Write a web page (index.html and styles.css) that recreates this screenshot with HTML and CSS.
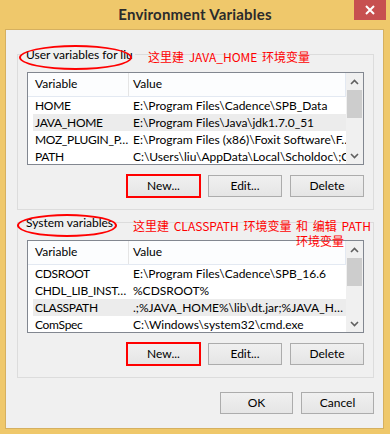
FILE: index.html
```html
<!DOCTYPE html>
<html lang="en">
<head>
    <meta charset="UTF-8">
    <meta name="viewport" content="width=device-width, initial-scale=1.0">
    <title>Environment Variables</title>
    <link rel="stylesheet" href="styles.css">
</head>
<body>
    <div class="window">
        <div class="titlebar">
            <span></span>
            <div class="title">Environment Variables</div>
            <div class="close-cell">
                <div class="close-btn">
                    <svg width="10" height="10" viewBox="0 0 10 10">
                        <path d="M1 1 L9 9 M9 1 L1 9" stroke="#fff" stroke-width="2"/>
                    </svg>
                </div>
            </div>
        </div>

        <div class="client">
            <!-- user variables -->
            <div class="group group-user">
                <span class="group-label">User variables for liu</span>
                <span class="ring ring-user"></span>
                <span class="note note-user">这里建 JAVA_HOME 环境变量</span>
                <div class="list">
                    <div class="table">
                        <div class="row head"><span class="c1">Variable</span><span class="c2">Value</span></div>
                        <div class="row"><span class="c1">HOME</span><span class="c2">E:\Program Files\Cadence\SPB_Data</span></div>
                        <div class="row selected"><span class="c1">JAVA_HOME</span><span class="c2">E:\Program Files\Java\jdk1.7.0_51</span></div>
                        <div class="row"><span class="c1">MOZ_PLUGIN_P…</span><span class="c2">E:\Program Files (x86)\Foxit Software\F…</span></div>
                        <div class="row"><span class="c1">PATH</span><span class="c2">C:\Users\liu\AppData\Local\Scholdoc\;C…</span></div>
                    </div>
                    <div class="scrollbar">
                        <div class="arrow">
                            <svg width="9" height="6" viewBox="0 0 9 6"><path d="M1 5 L4.5 1.5 L8 5" fill="none" stroke="#606060" stroke-width="1.6"/></svg>
                        </div>
                        <div class="track"><div class="thumb"></div></div>
                        <div class="arrow">
                            <svg width="9" height="6" viewBox="0 0 9 6"><path d="M1 1 L4.5 4.5 L8 1" fill="none" stroke="#606060" stroke-width="1.6"/></svg>
                        </div>
                    </div>
                </div>
                <div class="buttons">
                    <div class="btn marked">New...</div>
                    <div class="btn">Edit...</div>
                    <div class="btn">Delete</div>
                </div>
            </div>

            <!-- system variables -->
            <div class="group group-system">
                <span class="group-label">System variables</span>
                <span class="ring ring-system"></span>
                <span class="note note-system">这里建 CLASSPATH 环境变量 和 编辑 PATH<span class="note-second">环境变量</span></span>
                <div class="list">
                    <div class="table">
                        <div class="row head"><span class="c1">Variable</span><span class="c2">Value</span></div>
                        <div class="row"><span class="c1">CDSROOT</span><span class="c2">E:\Program Files\Cadence\SPB_16.6</span></div>
                        <div class="row"><span class="c1">CHDL_LIB_INST…</span><span class="c2">%CDSROOT%</span></div>
                        <div class="row selected"><span class="c1">CLASSPATH</span><span class="c2">.;%JAVA_HOME%\lib\dt.jar;%JAVA_H…</span></div>
                        <div class="row"><span class="c1">ComSpec</span><span class="c2">C:\Windows\system32\cmd.exe</span></div>
                    </div>
                    <div class="scrollbar">
                        <div class="arrow">
                            <svg width="9" height="6" viewBox="0 0 9 6"><path d="M1 5 L4.5 1.5 L8 5" fill="none" stroke="#606060" stroke-width="1.6"/></svg>
                        </div>
                        <div class="track"><div class="thumb"></div></div>
                        <div class="arrow">
                            <svg width="9" height="6" viewBox="0 0 9 6"><path d="M1 1 L4.5 4.5 L8 1" fill="none" stroke="#606060" stroke-width="1.6"/></svg>
                        </div>
                    </div>
                </div>
                <div class="buttons">
                    <div class="btn marked">New...</div>
                    <div class="btn">Edit...</div>
                    <div class="btn">Delete</div>
                </div>
            </div>

            <div class="footer">
                <div class="btn">OK</div>
                <div class="btn">Cancel</div>
            </div>
        </div>
    </div>
</body>
</html>
```

FILE: styles.css
```css
* {
    margin: 0;
    padding: 0;
    box-sizing: border-box;
}
body {
    font-family: Lato, "Liberation Sans", sans-serif;
    font-size: 12px;
    color: #000;
    background-color: #efc86b;
    width: 390px;
    height: 434px;
    overflow: hidden;
}
.window {
    display: flex;
    flex-direction: column;
    height: 100%;
}
.titlebar {
    height: 29px;
    flex-shrink: 0;
    display: grid;
    grid-template-columns: 1fr auto 1fr;
    align-items: start;
}
.title {
    font-size: 15px;
    font-weight: bold;
    color: #2b2b2b;
    line-height: 29px;
    letter-spacing: 0.2px;
}
.close-cell {
    display: flex;
    justify-content: flex-end;
    padding-right: 4px;
}
.close-btn {
    width: 32px;
    height: 20px;
    background-color: #c75050;
    display: flex;
    align-items: center;
    justify-content: center;
}
.client {
    margin-left: 5px;
    width: 379px;
    height: 400px;
    flex-shrink: 0;
    background-color: #f0f0f0;
    border: 1px solid #d5b060;
    display: flex;
    flex-direction: column;
}

/* group boxes */
.group {
    position: relative;
    flex-shrink: 0;
    margin: 24px 9px 0 11px;
    border: 1px solid #dcdcdc;
    padding: 17px 9px 12px 9px;
}
.group-system {
    margin-top: 12px;
}
.group-label {
    position: absolute;
    top: -8px;
    left: 6px;
    padding: 0 2px;
    line-height: 16px;
    background-color: #f0f0f0;
    white-space: nowrap;
}
.ring {
    position: absolute;
    border: 2px solid #f00;
    border-radius: 50%;
}
.ring-user {
    left: 1px;
    top: -10px;
    width: 113px;
    height: 25px;
}
.ring-system {
    left: -1px;
    top: -9px;
    width: 100px;
    height: 23px;
}
.note {
    position: absolute;
    color: #f00;
    font-family: "Noto Sans CJK SC", sans-serif;
    font-size: 12px;
    line-height: 15px;
    word-spacing: 2px;
    white-space: nowrap;
}
.note-user {
    left: 130px;
    top: -6px;
}
.note-system {
    left: 115px;
    top: -5px;
}
.note-second {
    display: block;
    margin-left: 163px;
}

/* list views */
.list {
    height: 93px;
    border: 1px solid #828790;
    background-color: #fff;
    display: flex;
    overflow: hidden;
}
.table {
    flex: 1;
    padding-left: 5px;
    min-width: 0;
}
.row {
    display: flex;
    height: 17px;
    line-height: 17px;
    white-space: nowrap;
}
.row.selected {
    background-color: #ececec;
}
.row.head {
    height: 24px;
    line-height: 22px;
    margin-left: -5px;
    padding-left: 5px;
    border-bottom: 1px solid #e3e9f2;
    border-right: 1px solid #e3e9f2;
    background-color: #fcfdfe;
}
.c1 {
    width: 96px;
    flex-shrink: 0;
    padding-left: 2px;
    letter-spacing: -0.3px;
}
.c2 {
    padding-left: 4px;
}
.head .c1 {
    border-right: 1px solid #e5e5e5;
    letter-spacing: 0;
}
.scrollbar {
    position: relative;
    width: 17px;
    flex-shrink: 0;
    background-color: #f0f0f0;
    display: flex;
    flex-direction: column;
}
.arrow {
    height: 17px;
    display: flex;
    align-items: center;
    justify-content: center;
}
.track {
    flex: 1;
}
.thumb {
    height: 28px;
    margin: 0 1px;
    background-color: #cdcdcd;
}

/* buttons */
.buttons {
    display: flex;
    justify-content: flex-end;
    gap: 8px;
    margin-top: 10px;
}
.btn {
    width: 74px;
    height: 22px;
    border: 1px solid #acacac;
    background: linear-gradient(#f0f0f0, #e5e5e5);
    text-align: center;
    line-height: 20px;
    color: #000;
}
.btn.marked {
    width: 73px;
    outline: 2px solid #f00;
    outline-offset: -1px;
}
.footer {
    display: flex;
    justify-content: flex-end;
    gap: 8px;
    margin-top: 14px;
    padding-right: 9px;
}
.footer .btn {
    width: 73px;
}
```
